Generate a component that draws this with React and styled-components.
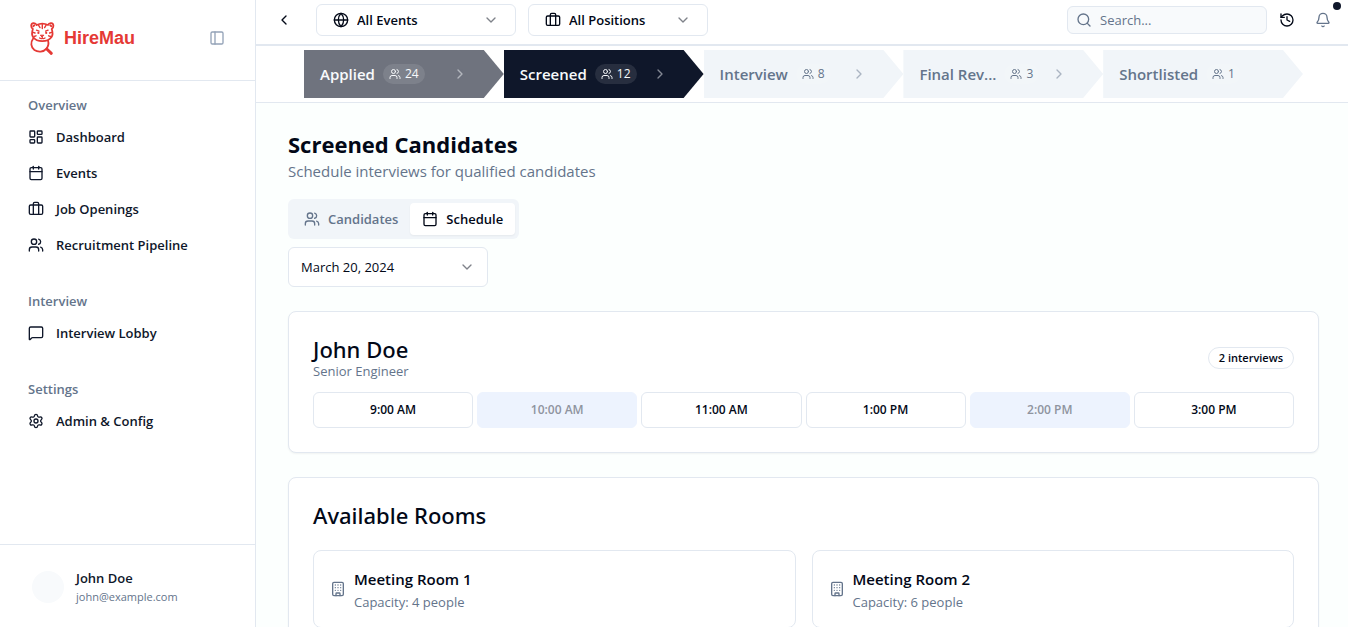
import React, { useState } from "react";
import styled, { createGlobalStyle, css } from "styled-components";
import {
  LayoutDashboard, Calendar, Users, MessageSquare, Settings,
  PanelLeft, ChevronLeft, ChevronRight, ChevronDown, Globe, Search, History, Bell, Building,
} from "lucide-react";

const color = {
  ink: "#020817",
  navy: "#0f172a",
  muted: "#64748b",
  line: "#e2e8f0",
  soft: "#f1f5f9",
  page: "#fcfffe",
  brand: "#e53935",
};

const GlobalStyle = createGlobalStyle`
  *, *::before, *::after { box-sizing: border-box; }
  html, body, #root { height: 100%; }
  body {
    margin: 0;
    color: ${color.ink};
    background: ${color.page};
    font-family: "Open Sans", "Noto Sans", sans-serif;
    font-size: 13px;
    line-height: 20px;
  }
  button, input, select { font: inherit; color: inherit; margin: 0; }
  button { border: 0; padding: 0; background: none; cursor: pointer; }
  h1, h2, h3, p, ul { margin: 0; padding: 0; }
  ul { list-style: none; }
  a { color: inherit; text-decoration: none; }
  svg { flex-shrink: 0; display: block; }
`;

const Shell = styled.div`
  display: grid;
  grid-template-columns: 256px minmax(0, 1fr);
  height: 100vh;
`;

const Sidebar = styled.aside`
  display: flex;
  flex-direction: column;
  background: #fff;
  border-right: 1px solid ${color.line};
  min-height: 0;
`;

const SidebarHeader = styled.div`
  display: flex;
  align-items: center;
  justify-content: space-between;
  height: 81px;
  padding: 0 30px 4px 28px;
  border-bottom: 1px solid ${color.line};
`;

const Brand = styled.a`
  display: flex;
  align-items: center;
  gap: 8px;
  color: ${color.brand};
  font: 700 18px/24px "Liberation Sans", Arial, sans-serif;
`;

const PanelToggle = styled.button`
  color: #94a3b8;
`;

const Nav = styled.nav`
  flex: 1;
  display: flex;
  flex-direction: column;
  gap: 24px;
  padding: 8px 12px;
  overflow: hidden;
`;

const NavLabel = styled.h2`
  padding: 0 16px;
  font-size: 13px;
  font-weight: 600;
  line-height: 32px;
  color: ${color.muted};
`;

const NavList = styled.ul`
  display: flex;
  flex-direction: column;
  gap: 4px;
`;

const NavLink = styled.a`
  display: flex;
  align-items: center;
  gap: 12px;
  height: 32px;
  padding: 0 16px;
  font-weight: 600;
  color: ${color.navy};
`;

const Account = styled.div`
  display: flex;
  align-items: center;
  gap: 12px;
  height: 83px;
  padding: 2px 32px 0;
  border-top: 1px solid ${color.line};
`;

const Avatar = styled.span`
  width: 32px;
  height: 32px;
  border-radius: 50%;
  background: #f8fafc;
`;

const AccountName = styled.p`
  font-weight: 600;
  color: ${color.navy};
`;

const AccountMail = styled.p`
  font-size: 11px;
  line-height: 18px;
  color: ${color.muted};
`;

const Workspace = styled.div`
  display: flex;
  flex-direction: column;
  min-width: 0;
  min-height: 0;
`;

const TopBar = styled.header`
  display: flex;
  align-items: center;
  justify-content: space-between;
  padding: 4px 7px 8px 12px;
  background: #fff;
  border-bottom: 2px solid ${color.line};
`;

const BarGroup = styled.div`
  display: flex;
  align-items: center;
  gap: ${(p) => p.$gap || 0}px;
`;

const IconButton = styled.button`
  position: relative;
  display: grid;
  place-items: center;
  width: ${(p) => p.$width || 36}px;
  height: 32px;
  color: ${(p) => (p.$muted ? color.muted : color.ink)};
`;

const AlertDot = styled.span`
  position: absolute;
  top: -2px;
  right: 0;
  width: 8px;
  height: 8px;
  border-radius: 50%;
  background: ${color.navy};
`;

const SelectBox = styled.label`
  display: flex;
  align-items: center;
  gap: 8px;
  width: ${(p) => p.$width}px;
  height: ${(p) => (p.$tall ? 40 : 32)}px;
  padding: 0 ${(p) => (p.$tall ? 12 : 16)}px;
  background: #fff;
  border: 1px solid ${color.line};
  border-radius: 6px;
  font-weight: ${(p) => (p.$tall ? 400 : 600)};
  > svg:last-child { opacity: 0.5; }
`;

const SelectField = styled.select`
  flex: 1;
  min-width: 0;
  appearance: none;
  border: 0;
  padding: 0;
  background: transparent;
  outline: none;
`;

const SearchBox = styled.label`
  display: flex;
  align-items: center;
  gap: 8px;
  width: 200px;
  height: 28px;
  margin-right: 2px;
  padding: 0 8px;
  color: ${color.muted};
  background: #f8fafc;
  border: 1px solid ${color.line};
  border-radius: 6px;
`;

const SearchInput = styled.input`
  flex: 1;
  min-width: 0;
  border: 0;
  padding: 0;
  background: transparent;
  outline: none;
  &::placeholder { color: ${color.muted}; opacity: 1; }
`;

const StageBar = styled.nav`
  display: flex;
  padding: 4px 45px 4px 48px;
  background: #fff;
  border-bottom: 1px solid ${color.line};
`;

const stageTone = {
  past: css`background: #6f737e; color: #f8fafc;`,
  current: css`background: ${color.navy}; color: #f8fafc;`,
  next: css`background: ${color.soft}; color: ${color.muted};`,
};

const Stage = styled.button`
  flex: 1 1 0;
  min-width: 0;
  display: flex;
  align-items: center;
  justify-content: space-between;
  height: 48px;
  padding: 0 36px 0 16px;
  clip-path: polygon(0 0, calc(100% - 20px) 0, 100% 50%, calc(100% - 20px) 100%, 0 100%);
  ${(p) => stageTone[p.$tone]}
  > svg { opacity: 0.5; }
`;

const StageText = styled.span`
  display: flex;
  align-items: center;
  gap: 8px;
`;

const StageName = styled.span`
  white-space: nowrap;
  font-size: 15px;
  font-weight: 600;
`;

const StageCount = styled.span`
  display: flex;
  align-items: center;
  gap: 4px;
  height: 20px;
  padding: 0 6px;
  border-radius: 10px;
  font-size: 12px;
  line-height: 20px;
  background: rgba(255, 255, 255, 0.1);
`;

const Content = styled.main`
  flex: 1;
  min-height: 0;
  overflow: auto;
  scrollbar-width: none;
  display: flex;
  flex-direction: column;
  gap: 24px;
  padding: 24px 29px 24px 32px;
`;

const PageTitle = styled.h1`
  font-size: 22px;
  font-weight: 700;
  line-height: 34px;
`;

const Subtitle = styled.p`
  font-size: 15px;
  line-height: 20px;
  color: ${color.muted};
`;

const Controls = styled.div`
  display: flex;
  flex-direction: column;
  align-items: flex-start;
  gap: 8px;
  margin-top: 18px;
`;

const Tabs = styled.div`
  display: flex;
  height: 40px;
  padding: 4px;
  background: ${color.soft};
  border-radius: 6px;
`;

const Tab = styled.button`
  display: flex;
  align-items: center;
  gap: 8px;
  padding: 0 12px;
  border-radius: 4px;
  font-weight: 600;
  color: ${(p) => (p.$active ? color.ink : color.muted)};
  background: ${(p) => (p.$active ? "#fff" : "transparent")};
  box-shadow: ${(p) => (p.$active ? "0 1px 2px rgba(0, 0, 0, 0.05)" : "none")};
`;

const Card = styled.section`
  flex-shrink: 0;
  padding: 24px;
  background: #fff;
  border: 1px solid ${color.line};
  border-radius: 8px;
  box-shadow: 0 1px 2px rgba(0, 0, 0, 0.05);
`;

const CardHead = styled.div`
  display: flex;
  align-items: center;
  justify-content: space-between;
  padding-bottom: 12px;
`;

const CardTitle = styled.h2`
  font-family: "Noto Sans", "Open Sans", sans-serif;
  font-size: 22px;
  font-weight: 500;
  line-height: 26px;
`;

const Small = styled.p`
  line-height: 18px;
  color: ${color.muted};
`;

const Pill = styled.span`
  padding: 1px 10px;
  border: 1px solid ${color.line};
  border-radius: 12px;
  font-size: 11px;
  font-weight: 600;
  line-height: 18px;
`;

const Slots = styled.div`
  display: grid;
  grid-template-columns: repeat(6, minmax(0, 1fr));
  gap: 4px;
`;

const Slot = styled.button`
  height: 36px;
  border: 1px solid ${color.line};
  border-radius: 6px;
  background: #fff;
  font-size: 12px;
  font-weight: 600;
  &:disabled {
    color: #8f949f;
    background: #edf3fe;
    border-color: #edf3fe;
  }
`;

const Rooms = styled.div`
  display: grid;
  grid-template-columns: repeat(2, minmax(0, 1fr));
  gap: 16px;
  padding-top: 22px;
`;

const Room = styled.article`
  display: flex;
  align-items: center;
  gap: 8px;
  padding: 16px;
  border: 1px solid ${color.line};
  border-radius: 8px;
  > svg { color: ${color.muted}; }
`;

const RoomText = styled.div`
  display: grid;
  gap: 2px;
`;

const RoomName = styled.h3`
  font-size: 15px;
  font-weight: 600;
  line-height: 24px;
`;

function TigerLogo() {
  return (
    <svg width="28" height="36" viewBox="0 0 28 36" fill="none" stroke="currentColor" strokeWidth="1.8" strokeLinecap="round" strokeLinejoin="round" aria-hidden="true">
      <path d="M8.600 5C7.500 2.200 3.200 2.400 3.200 5.800C3.200 7.400 3.900 8.400 4.900 9C3.800 12 3.600 15 5.200 17.300C7.200 20 10.500 21.200 14.300 21.200C18.100 21.200 21.400 20 23.400 17.300C25 15 24.800 12 23.700 9C24.700 8.400 25.400 7.400 25.400 5.800C25.400 2.400 21.100 2.200 20 5C16.500 3.200 12.100 3.200 8.600 5Z" />
      <path d="M5.200 6.200L6.400 5.200M23.400 6.200L22.200 5.200" />
      <path d="M14.300 4.500V8.500M10.500 5.200L12 7.600M18.100 5.200L16.600 7.600M4.900 12.400L7 13M23.700 12.400L21.600 13M6 16.500L8 15.800M22.600 16.500L20.600 15.800" strokeWidth="1.400" />
      <path d="M8.500 10.200L11 11.200M20.100 10.200L17.600 11.200" strokeWidth="1.300" />
      <circle cx="10.400" cy="12.900" r="1.100" fill="currentColor" stroke="none" />
      <circle cx="18.200" cy="12.900" r="1.100" fill="currentColor" stroke="none" />
      <path d="M12.700 15.200H15.900L14.300 16.800Z" fill="currentColor" strokeWidth="1" />
      <path d="M14.300 17V18.200M11.600 18Q13 19.200 14.300 18.200Q15.600 19.200 17 18" strokeWidth="1.200" />
      <path d="M5.200 18.500C2.300 22.300 2.800 27.300 6.400 30C10 32.500 15.500 32.200 18.500 28.600C20.400 26.200 20.900 23.300 20 20.500" />
      <path d="M18.800 29L23.300 33.300" strokeWidth="3" />
    </svg>
  );
}

/* Briefcase with two vertical straps */
function CaseIcon({ size = 16 }) {
  return (
    <svg width={size} height={size} viewBox="0 0 24 24" fill="none" stroke="currentColor" strokeWidth="2" strokeLinecap="round" strokeLinejoin="round" aria-hidden="true">
      <path d="M16 20V4a2 2 0 0 0-2-2h-4a2 2 0 0 0-2 2v16" />
      <rect width="20" height="14" x="2" y="6" rx="2" />
    </svg>
  );
}

const navGroups = [
  ["Overview", [[LayoutDashboard, "Dashboard"], [Calendar, "Events"], [CaseIcon, "Job Openings"], [Users, "Recruitment Pipeline"]]],
  ["Interview", [[MessageSquare, "Interview Lobby"]]],
  ["Settings", [[Settings, "Admin & Config"]]],
];

const stages = [
  ["Applied", 24, "past"],
  ["Screened", 12, "current"],
  ["Interview", 8, "next"],
  ["Final Rev...", 3, "next"],
  ["Shortlisted", 1, "next"],
];

const slots = [
  ["9:00 AM"], ["10:00 AM", true], ["11:00 AM"], ["1:00 PM"], ["2:00 PM", true], ["3:00 PM"],
];

const rooms = [["Meeting Room 1", 4], ["Meeting Room 2", 6]];

export default function App() {
  const [tab, setTab] = useState("Schedule");
  return (
    <Shell>
      <GlobalStyle />
      <Sidebar>
        <SidebarHeader>
          <Brand href="#"><TigerLogo />HireMau</Brand>
          <PanelToggle aria-label="Toggle sidebar"><PanelLeft size={16} /></PanelToggle>
        </SidebarHeader>
        <Nav aria-label="Main">
          {navGroups.map(([label, items]) => (
            <div key={label}>
              <NavLabel>{label}</NavLabel>
              <NavList>
                {items.map(([Icon, text]) => (
                  <li key={text}><NavLink href="#"><Icon size={16} />{text}</NavLink></li>
                ))}
              </NavList>
            </div>
          ))}
        </Nav>
        <Account>
          <Avatar />
          <div>
            <AccountName>John Doe</AccountName>
            <AccountMail>john@example.com</AccountMail>
          </div>
        </Account>
      </Sidebar>
      <Workspace>
        <TopBar>
          <BarGroup $gap={16}>
            <IconButton $width={32} aria-label="Back"><ChevronLeft size={16} /></IconButton>
            <BarGroup $gap={12}>
              <SelectBox $width={200}>
                <Globe size={16} />
                <SelectField aria-label="Event"><option>All Events</option></SelectField>
                <ChevronDown size={16} />
              </SelectBox>
              <SelectBox $width={180}>
                <CaseIcon />
                <SelectField aria-label="Position"><option>All Positions</option></SelectField>
                <ChevronDown size={16} />
              </SelectBox>
            </BarGroup>
          </BarGroup>
          <BarGroup>
            <SearchBox>
              <Search size={16} />
              <SearchInput type="search" placeholder="Search..." aria-label="Search" />
            </SearchBox>
            <IconButton aria-label="History"><History size={16} /></IconButton>
            <IconButton $muted aria-label="Notifications"><Bell size={16} /><AlertDot /></IconButton>
          </BarGroup>
        </TopBar>
        <StageBar aria-label="Pipeline stages">
          {stages.map(([name, count, tone], i) => (
            <Stage key={name} $tone={tone}>
              <StageText>
                <StageName>{name}</StageName>
                <StageCount><Users size={12} />{count}</StageCount>
              </StageText>
              {i < stages.length - 1 && <ChevronRight size={16} />}
            </Stage>
          ))}
        </StageBar>
        <Content>
          <div>
            <PageTitle>Screened Candidates</PageTitle>
            <Subtitle>Schedule interviews for qualified candidates</Subtitle>
            <Controls>
              <Tabs role="tablist">
                {[[Users, "Candidates"], [Calendar, "Schedule"]].map(([Icon, name]) => (
                  <Tab key={name} role="tab" aria-selected={tab === name} $active={tab === name} onClick={() => setTab(name)}>
                    <Icon size={16} />{name}
                  </Tab>
                ))}
              </Tabs>
              <SelectBox $width={200} $tall>
                <SelectField aria-label="Date"><option>March 20, 2024</option></SelectField>
                <ChevronDown size={16} />
              </SelectBox>
            </Controls>
          </div>
          <Card>
            <CardHead>
              <div>
                <CardTitle>John Doe</CardTitle>
                <Small>Senior Engineer</Small>
              </div>
              <Pill>2 interviews</Pill>
            </CardHead>
            <Slots>
              {slots.map(([time, taken]) => <Slot key={time} disabled={taken}>{time}</Slot>)}
            </Slots>
          </Card>
          <Card>
            <CardTitle>Available Rooms</CardTitle>
            <Rooms>
              {rooms.map(([name, seats]) => (
                <Room key={name}>
                  <Building size={16} />
                  <RoomText>
                    <RoomName>{name}</RoomName>
                    <Small>Capacity: {seats} people</Small>
                  </RoomText>
                </Room>
              ))}
            </Rooms>
          </Card>
        </Content>
      </Workspace>
    </Shell>
  );
}
